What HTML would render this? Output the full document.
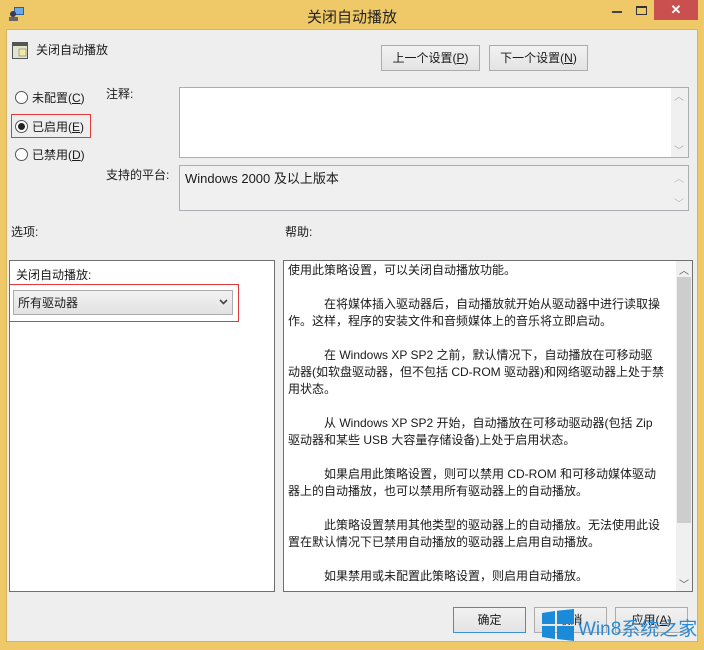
<!DOCTYPE html>
<html><head><meta charset="utf-8"><style>
*{margin:0;padding:0;box-sizing:border-box}
body{width:704px;height:650px;background:#efc868;position:relative;overflow:hidden;font-family:"Liberation Sans","Noto Sans CJK SC","WenQuanYi Zen Hei",sans-serif;font-size:12px;color:#1a1a1a}
.a{position:absolute;white-space:nowrap}
.client{position:absolute;left:6px;top:29px;width:692px;height:613px;background:#eeeeee;border:1px solid #d9b55a}
.btn{position:absolute;background:linear-gradient(#f2f2f2,#e3e3e3);border:1px solid #acacac;text-align:center;line-height:24px}
.radio{position:absolute;width:13px;height:13px;border-radius:50%;border:1px solid #555;background:#fff}
.sb{position:absolute;background:#f0f0f0}
</style></head><body>
<!-- title bar -->
<svg class="a" style="left:8px;top:6px" width="18" height="16" viewBox="0 0 18 16"><rect x="6" y="1" width="10" height="8" fill="#2a5fa8"/><rect x="7" y="2" width="8" height="6" fill="#6aa8e6"/><circle cx="5" cy="8" r="3" fill="#3a3a5a"/><rect x="1" y="11" width="9" height="4" fill="#666"/></svg>
<div class="a" style="left:0;width:704px;top:6px;text-align:center;font-size:15px;color:#222">关闭自动播放</div>
<div class="a" style="left:612px;top:11px;width:10px;height:2px;background:#444"></div>
<div class="a" style="left:636px;top:6px;width:11px;height:9px;border:1px solid #333;border-top-width:2px"></div>
<div class="a" style="left:654px;top:0;width:44px;height:20px;background:#c9504f;color:#fff;text-align:center;font-size:13px;line-height:20px;font-weight:bold">✕</div>

<div class="client"></div>
<!-- header -->
<svg class="a" style="left:12px;top:42px" width="16" height="17" viewBox="0 0 16 17"><rect x="0.5" y="0.5" width="15" height="16" fill="#dfe6cc" stroke="#555"/><rect x="1" y="1" width="14" height="3" fill="#555"/><rect x="7" y="7" width="7" height="7" fill="#f5e9a0" stroke="#777" stroke-width=".6"/></svg>
<div class="a" style="left:36px;top:41px">关闭自动播放</div>
<div class="btn" style="left:381px;top:45px;width:99px;height:26px">上一个设置(<u>P</u>)</div>
<div class="btn" style="left:489px;top:45px;width:99px;height:26px">下一个设置(<u>N</u>)</div>

<!-- radios -->
<div class="radio" style="left:15px;top:91px"></div>
<div class="a" style="left:32px;top:89px">未配置(<u>C</u>)</div>
<div class="radio" style="left:15px;top:120px"></div>
<div class="a" style="left:18px;top:123px;width:7px;height:7px;border-radius:50%;background:#222"></div>
<div class="a" style="left:32px;top:118px">已启用(<u>E</u>)</div>
<div class="a" style="left:11px;top:114px;width:80px;height:24px;border:1px solid #e03a3a"></div>
<div class="radio" style="left:15px;top:148px"></div>
<div class="a" style="left:32px;top:146px">已禁用(<u>D</u>)</div>

<div class="a" style="left:106px;top:85px">注释:</div>
<div class="a" style="left:179px;top:87px;width:510px;height:71px;background:#fff;border:1px solid #abadb3"></div>
<div class="sb" style="left:671px;top:88px;width:17px;height:69px"></div>
<div class="a" style="left:674px;top:88px;color:#aaa;font-size:10px">︿</div>
<div class="a" style="left:674px;top:142px;color:#aaa;font-size:10px">﹀</div>

<div class="a" style="left:106px;top:166px">支持的平台:</div>
<div class="a" style="left:179px;top:165px;width:510px;height:46px;background:#f0f0f0;border:1px solid #abadb3"></div>
<div class="a" style="left:185px;top:168px;font-size:13px">Windows 2000 及以上版本</div>
<div class="a" style="left:674px;top:170px;color:#bbb;font-size:10px">︿</div>
<div class="a" style="left:674px;top:195px;color:#bbb;font-size:10px">﹀</div>

<div class="a" style="left:11px;top:223px">选项:</div>
<div class="a" style="left:285px;top:223px">帮助:</div>

<!-- options -->
<div class="a" style="left:9px;top:260px;width:266px;height:332px;background:#fff;border:1px solid #707070"></div>
<div class="a" style="left:16px;top:266px">关闭自动播放:</div>
<div class="a" style="left:13px;top:290px;width:220px;height:25px;border:1px solid #acacac;background:linear-gradient(#f2f2f2,#e2e2e2)"></div>
<div class="a" style="left:18px;top:294px">所有驱动器</div>
<svg class="a" style="left:219px;top:299px" width="9" height="6" viewBox="0 0 9 6"><path d="M1 1 L4.5 4.5 L8 1" fill="none" stroke="#444" stroke-width="1.6"/></svg>
<div class="a" style="left:9px;top:284px;width:230px;height:38px;border:1px solid #e03a3a"></div>

<!-- help -->
<div class="a" style="left:283px;top:260px;width:410px;height:332px;background:#fff;border:1px solid #707070"></div>
<div class="sb" style="left:676px;top:261px;width:16px;height:330px"></div>
<div class="a" style="left:677px;top:277px;width:14px;height:246px;background:#cdcdcd"></div>
<div class="a" style="left:679px;top:262px;color:#555;font-size:10px">︿</div>
<div class="a" style="left:679px;top:576px;color:#555;font-size:10px">﹀</div>
<div class="a" style="left:288px;top:262px;line-height:17px;font-size:12px">使用此策略设置，可以关闭自动播放功能。<br><br>
　　　在将媒体插入驱动器后，自动播放就开始从驱动器中进行读取操<br>作。这样，程序的安装文件和音频媒体上的音乐将立即启动。<br><br>
　　　在 Windows XP SP2 之前，默认情况下，自动播放在可移动驱<br>动器(如软盘驱动器，但不包括 CD-ROM 驱动器)和网络驱动器上处于禁<br>用状态。<br><br>
　　　从 Windows XP SP2 开始，自动播放在可移动驱动器(包括 Zip<br>驱动器和某些 USB 大容量存储设备)上处于启用状态。<br><br>
　　　如果启用此策略设置，则可以禁用 CD-ROM 和可移动媒体驱动<br>器上的自动播放，也可以禁用所有驱动器上的自动播放。<br><br>
　　　此策略设置禁用其他类型的驱动器上的自动播放。无法使用此设<br>置在默认情况下已禁用自动播放的驱动器上启用自动播放。<br><br>
　　　如果禁用或未配置此策略设置，则启用自动播放。</div>

<!-- bottom buttons -->
<div class="btn" style="left:453px;top:607px;width:73px;height:26px;border-color:#3c8fd8">确定</div>
<div class="btn" style="left:534px;top:607px;width:73px;height:26px">取消</div>
<div class="btn" style="left:615px;top:607px;width:73px;height:26px">应用(<u>A</u>)</div>

<!-- watermark -->
<svg class="a" style="left:542px;top:609px" width="32" height="32" viewBox="0 0 32 32"><path d="M0 4 L13 2 L13 15 L0 15Z M15 1.7 L32 0 L32 15 L15 15Z M0 17 L13 17 L13 30 L0 28Z M15 17 L32 17 L32 32 L15 30Z" fill="#1b8ad8"/></svg>
<div class="a" style="left:578px;top:614px;font-size:19px;color:#2a8ad6">Win8系统之家</div>
</body></html>
